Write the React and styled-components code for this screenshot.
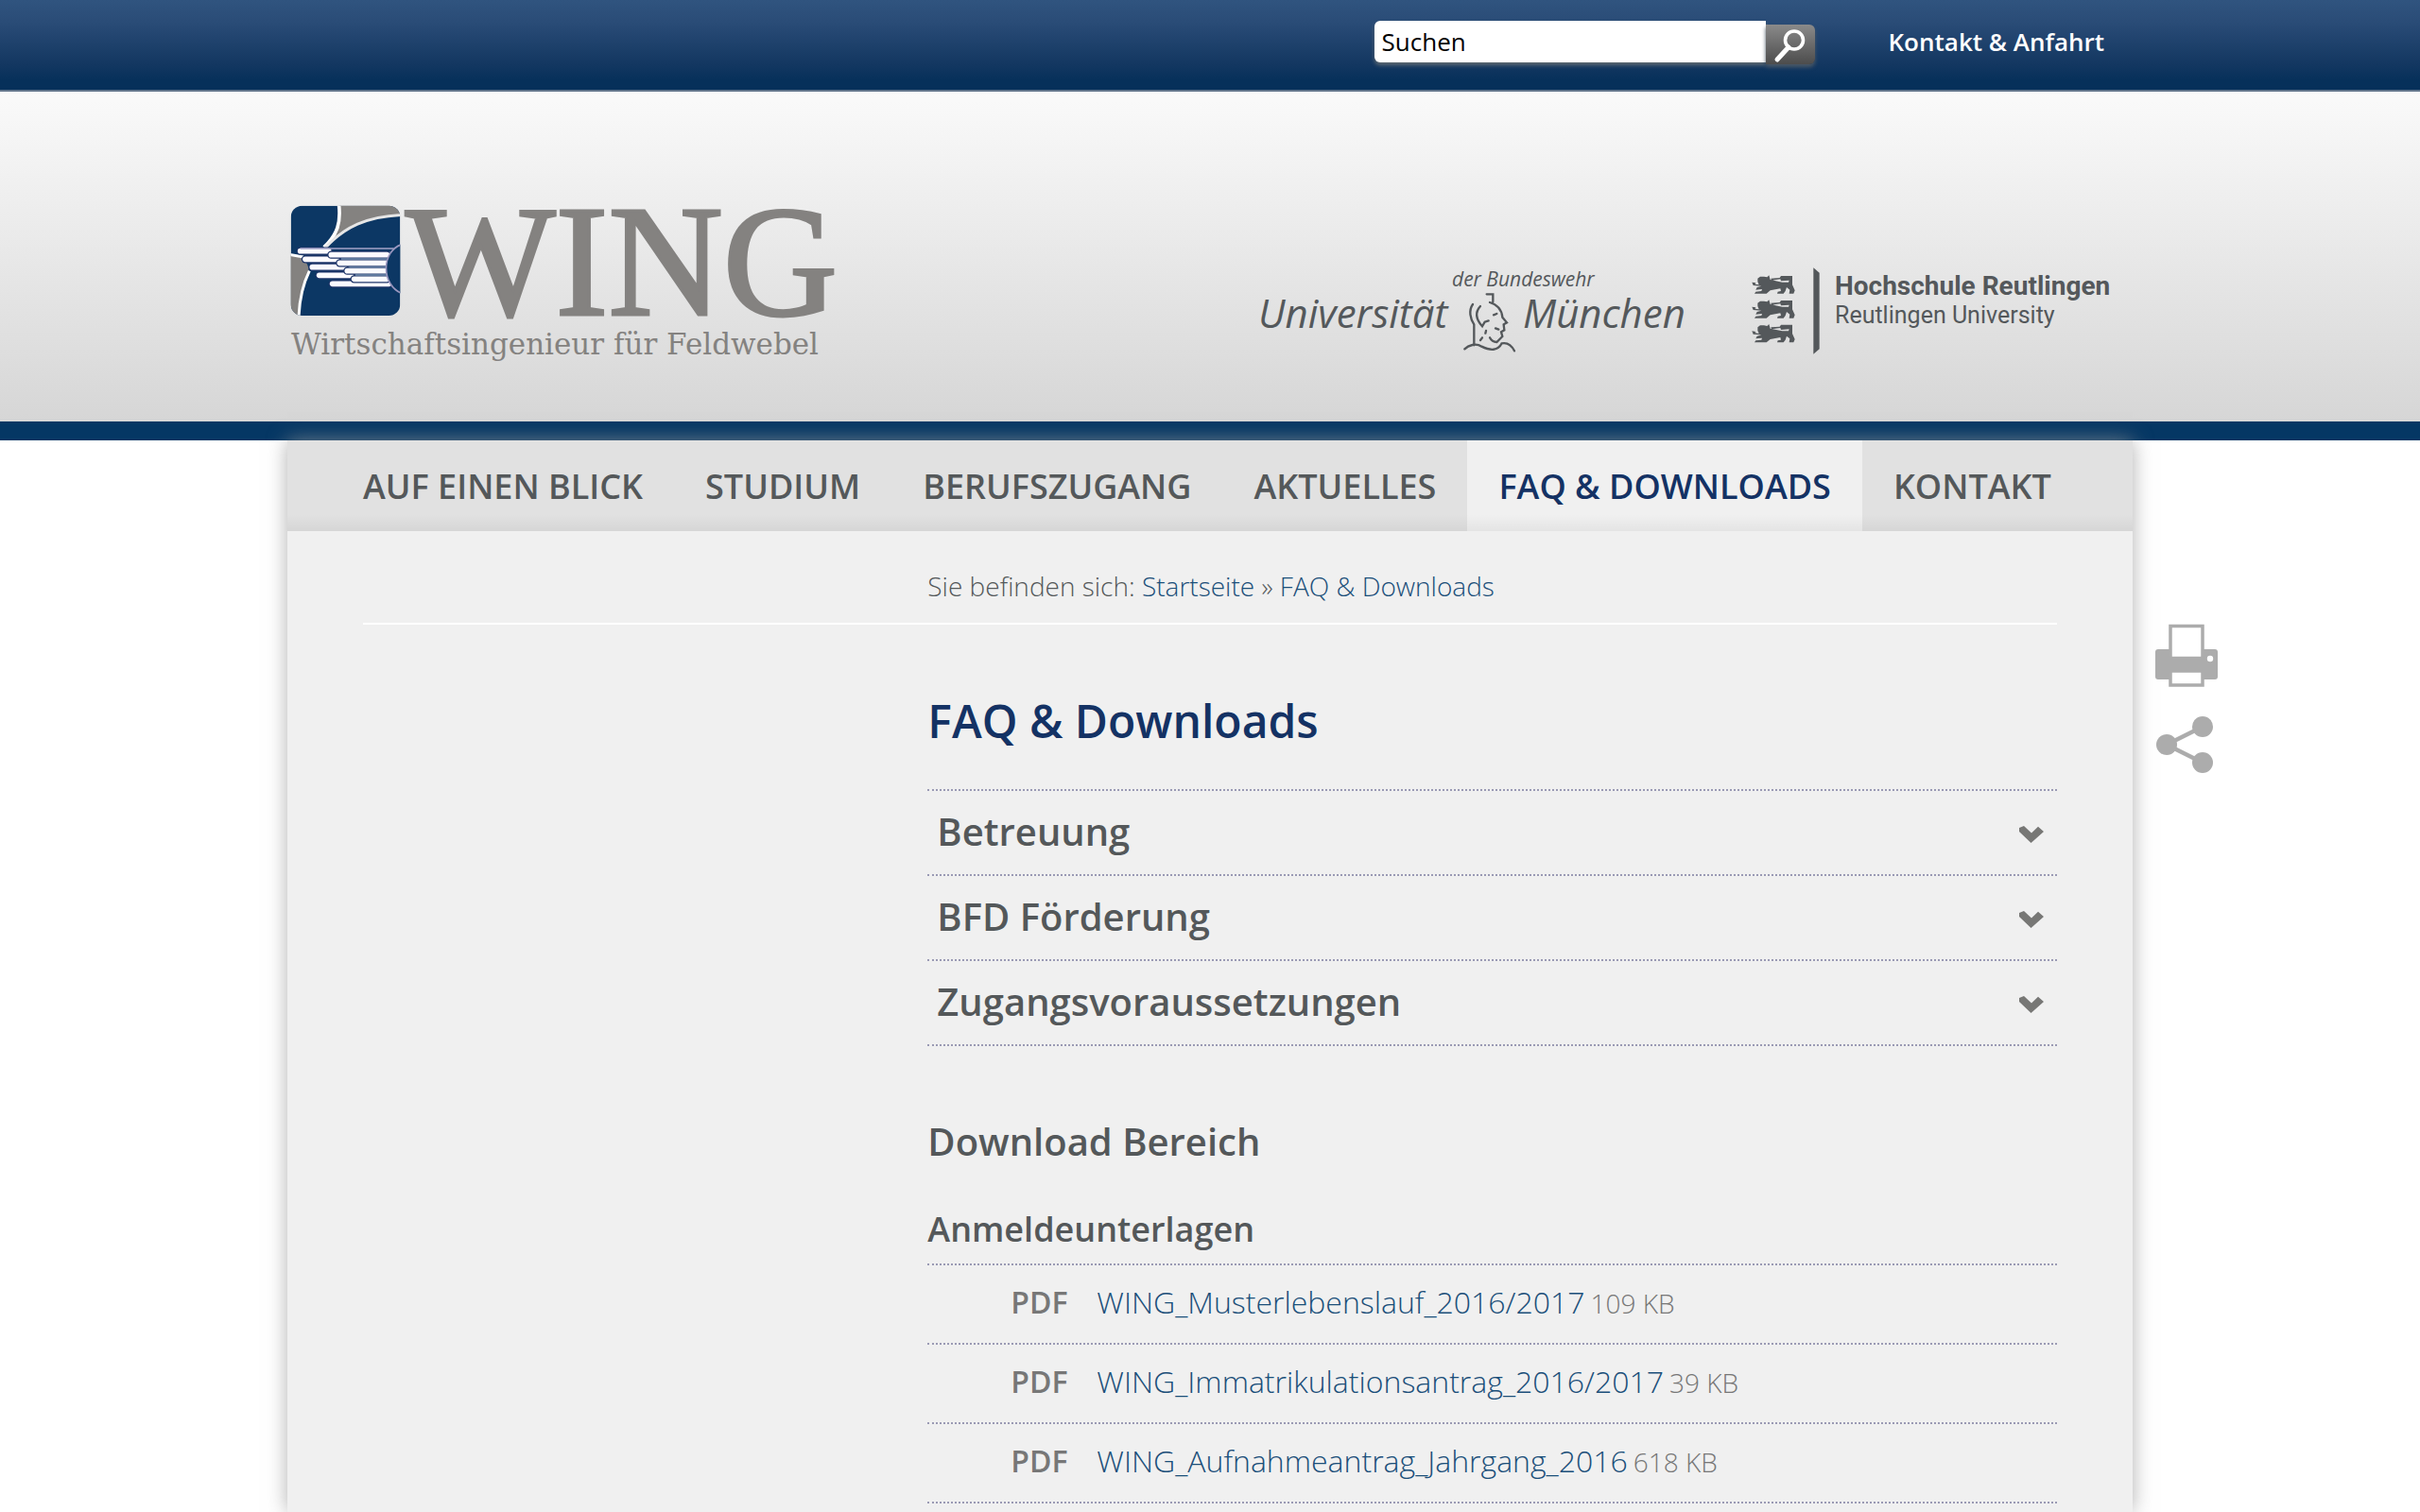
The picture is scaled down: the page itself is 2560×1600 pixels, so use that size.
import React, { useState } from "react";
import styled, { createGlobalStyle } from "styled-components";

const color = {
  navy: "#143264",
  bar: "#053764",
  text: "#54585a",
  muted: "#777777",
  link: "#1b4f7a",
  dots: "#9a9ab4",
  panel: "#f0f0f0",
  nav: "#e1e1e1",
  icon: "#acacac",
  logoGrey: "#848280",
  logoBlue: "#0c3764",
  partner: "#54585b",
};

const GlobalStyle = createGlobalStyle`
  *, *::before, *::after { box-sizing: border-box; }
  body {
    margin: 0;
    background: #fff;
    color: ${color.text};
    font-family: "Open Sans", "Noto Sans", sans-serif;
  }
  h1, h2, h3, p, ul { margin: 0; padding: 0; }
  ul { list-style: none; }
  a { text-decoration: none; }
`;

const Page = styled.div`
  display: flex;
  flex-direction: column;
  min-height: 100vh;
`;

const Container = styled.div`
  width: 100%;
  max-width: 1952px;
  margin: 0 auto;
  display: flex;
`;

const TopBar = styled.div`
  height: 97px;
  background: linear-gradient(#30547f, #2a4c77 24%, #133761 72%, #06305a 90%);
  border-bottom: 2px solid #62758b;
`;

const TopBarInner = styled(Container)`
  justify-content: flex-end;
  align-items: flex-start;
  gap: 78px;
  padding: 22px 30px 0 0;
`;

const SearchForm = styled.form`
  display: flex;
  align-items: flex-start;
`;

const SearchInput = styled.input`
  width: 414px;
  height: 44px;
  padding: 0 8px;
  border: 0;
  border-radius: 6px 0 0 6px;
  background: #fff;
  box-shadow: 0 3px 4px #5f6a72;
  color: #000;
  font: 400 26px "Open Sans", sans-serif;
  outline: none;
`;

const SearchButton = styled.button`
  width: 52px;
  height: 42px;
  margin-top: 4px;
  padding: 0;
  border: 0;
  border-radius: 0 6px 6px 0;
  background: linear-gradient(#8a8a8a, #4c4c4c);
  box-shadow: 0 3px 4px #4d5a66;
  cursor: pointer;
  svg { display: block; }
`;

const TopLink = styled.a`
  color: #fff;
  font-size: 26px;
  font-weight: 600;
  line-height: 44px;
`;

const Header = styled.header`
  background: linear-gradient(#fafafa, #d6d6d6);
  border-bottom: 20px solid ${color.bar};
`;

const HeaderInner = styled(Container)`
  justify-content: space-between;
  align-items: flex-end;
  height: 349px;
  padding: 0 4px 56px 0;
`;

const Partners = styled.div`
  display: flex;
  align-items: flex-end;
  gap: 40px;
`;

const LogoLink = styled.a`
  svg { display: block; }
`;

const Body = styled.div`
  flex: 1;
  display: grid;
  grid-template-columns: 1fr minmax(0, 1952px) 1fr;
`;

const Panel = styled.main`
  grid-column: 2;
  background: ${color.panel};
  box-shadow: 0 0 20px rgba(150, 150, 150, 0.75);
`;

const Nav = styled.nav`
  display: flex;
  padding: 0 47px;
  background: linear-gradient(rgba(0, 0, 0, 0) 82%, rgba(0, 0, 0, 0.05)) ${color.nav};
`;

const NavLink = styled.a`
  padding: 2px 33px 0;
  background: ${(p) =>
    p.$active ? `linear-gradient(rgba(0, 0, 0, 0) 82%, rgba(0, 0, 0, 0.05)) ${color.panel}` : "none"};
  color: ${(p) => (p.$active ? color.navy : color.text)};
  font-size: 36px;
  font-weight: 600;
  line-height: 94px;
  text-transform: uppercase;
  white-space: nowrap;
`;

const Content = styled.div`
  padding: 0 80px;
`;

const Columns = styled.div`
  display: grid;
  grid-template-columns: 1fr 2fr;
`;

const Main = styled.div`
  grid-column: 2;
`;

const BreadcrumbRow = styled(Columns)`
  padding: 39px 0 20px;
  border-bottom: 2px solid #fff;
`;

const Breadcrumb = styled(Main)`
  font-size: 28px;
  font-weight: 300;
  line-height: 38px;
`;

const CrumbLink = styled.a`
  color: ${color.link};
`;

const Title = styled.h1`
  margin: 70px 0 40px;
  color: ${color.navy};
  font-size: 48px;
  font-weight: 600;
  line-height: 64px;
`;

const Accordion = styled.div`
  border-top: 2px dotted ${color.dots};
`;

const AccordionButton = styled.button`
  display: flex;
  justify-content: space-between;
  align-items: center;
  width: 100%;
  height: 90px;
  padding: 0 14px 4px 10px;
  border: 0;
  border-bottom: 2px dotted ${color.dots};
  background: none;
  color: ${color.text};
  font: 600 40px "Open Sans", sans-serif;
  text-align: left;
  cursor: pointer;
  svg { margin-top: 8px; }
`;

const SectionTitle = styled.h2`
  margin: 72px 0 40px;
  font-size: 40px;
  font-weight: 600;
  line-height: 58px;
`;

const GroupTitle = styled.h3`
  margin-bottom: 12px;
  font-size: 36px;
  font-weight: 600;
  line-height: 48px;
`;

const DownloadList = styled.ul`
  border-top: 2px dotted ${color.dots};
`;

const DownloadItem = styled.li`
  display: flex;
  align-items: baseline;
  height: 84px;
  padding-left: 88px;
  border-bottom: 2px dotted ${color.dots};
  line-height: 78px;
`;

const FileType = styled.span`
  width: 91px;
  color: ${color.muted};
  font-size: 32px;
  font-weight: 600;
`;

const FileLink = styled.a`
  margin-right: 6px;
  color: ${color.link};
  font-size: 32px;
  font-weight: 300;
`;

const FileSize = styled.span`
  color: ${color.muted};
  font-size: 28px;
  font-weight: 300;
`;

const Tools = styled.aside`
  display: flex;
  flex-direction: column;
  align-items: flex-start;
  gap: 30px;
  padding: 194px 0 0 24px;
`;

const ToolButton = styled.button`
  padding: 0;
  border: 0;
  background: none;
  cursor: pointer;
  svg { display: block; }
`;

const SearchIcon = () => (
  <svg width="52" height="42" viewBox="0 0 52 42" fill="none" stroke="#fff" aria-hidden="true">
    <circle cx="30" cy="16.500" r="9.500" strokeWidth="3.600" />
    <path d="M24 24 12 37" strokeWidth="5" strokeLinecap="round" />
  </svg>
);

const Chevron = () => (
  <svg width="26" height="18" viewBox="0 0 26 18" aria-hidden="true">
    <path d="M0 2 5 0 13 7.500 20 .8 26 6 12.500 18 0 6Z" fill="#777775" />
  </svg>
);

const PrintIcon = () => (
  <svg width="68" height="68" viewBox="0 0 68 68" aria-hidden="true">
    <rect x="0" y="27" width="66" height="32" rx="3" fill={color.icon} />
    <rect x="16" y="2.500" width="34" height="34" fill="#fff" stroke={color.icon} strokeWidth="3.500" />
    <rect x="16" y="50" width="34" height="15" fill="#fff" stroke={color.icon} strokeWidth="3.500" />
    <rect x="14" y="35" width="38" height="16" fill={color.icon} />
    <circle cx="58" cy="37" r="3.200" fill="#fff" />
  </svg>
);

const ShareIcon = () => (
  <svg width="62" height="62" viewBox="0 0 62 62" aria-hidden="true">
    <path d="M50 11 12 30 50 49" fill="none" stroke={color.icon} strokeWidth="4.500" />
    <circle cx="50" cy="11" r="11" fill={color.icon} />
    <circle cx="12" cy="30" r="11" fill={color.icon} />
    <circle cx="50" cy="49" r="11" fill={color.icon} />
  </svg>
);

const SHORT_FEATHERS = [[65, 182, 155], [81, 208, 180], [103, 233, 204], [125, 259, 226], [167, 286, 346]];
const LONG_FEATHERS = [[163, 194], [190, 220], [214, 245], [236, 271]];

const WingLogo = () => (
  <svg width="588" height="210" viewBox="304 180 588 210" role="img" aria-label="WING – Wirtschaftsingenieur für Feldwebel">
    <defs>
      <clipPath id="emblem"><rect x="35" y="38" width="347" height="349" rx="36" /></clipPath>
    </defs>
    <g transform="translate(296 205) scale(.33333)">
      <g clipPath="url(#emblem)">
        <rect x="35" y="38" width="347" height="349" fill={color.logoBlue} />
        <path d="M188 30C194 90 185 130 150 168 210 105 280 72 390 66V30Z" fill={color.logoGrey} />
        <path d="M30 195Q90 200 92 245C72 285 62 330 58 395H30Z" fill={color.logoGrey} />
        <path d="M187 30C195 92 183 130 140 170" fill="none" stroke="#fff" strokeWidth="11" />
        <path d="M144 172C205 105 275 72 390 67" fill="none" stroke="#e6e6e6" strokeWidth="9" />
        <path d="M30 193 75 201M94 245C73 288 62 330 60 395" fill="none" stroke="#fff" strokeWidth="9" />
        <path d="M155 184H350V290H240Z" fill="#6d88ab" />
        <g strokeLinecap="round">
          {SHORT_FEATHERS.map(([x, y, end]) => (
            <g key={y}>
              <path d={`M${x} ${y}H${end}`} stroke="#1f3568" strokeWidth="25" />
              <path d={`M${x} ${y}H${end}`} stroke="#fbfaff" strokeWidth="17" />
            </g>
          ))}
          {LONG_FEATHERS.map(([x, y]) => (
            <g key={y}>
              <path d={`M${x} ${y}H340`} stroke="#1f3568" strokeWidth="25" />
              <path d={`M${x} ${y}H340`} stroke="#fbfaff" strokeWidth="17" />
            </g>
          ))}
        </g>
        <path d="M195 207H340M220 233H340M240 258H340" stroke="#6d88ab" strokeWidth="4" />
        <path d="M65 174H362" stroke="#a5a5c8" strokeWidth="4" />
        <path d="M390 160C320 180 320 292 390 318Z" fill={color.logoBlue} stroke="#9a97bf" strokeWidth="5" />
      </g>
    </g>
    <text x="429" y="333" fontFamily='"Liberation Serif", serif' fontSize="168" fill={color.logoGrey} stroke={color.logoGrey} strokeWidth="3">WING</text>
    <text x="308" y="375" fontFamily='"DejaVu Serif", serif' fontSize="31" fill={color.logoGrey}>
      Wirtschaftsingenieur für Feldwebel
    </text>
  </svg>
);

const UniLogo = () => (
  <svg width="480" height="120" viewBox="1330 270 480 120" fill={color.partner} role="img" aria-label="Universität der Bundeswehr München">
    <g fontFamily='"Open Sans", sans-serif' fontStyle="italic" fontWeight="500">
      <text x="1536" y="303" fontSize="21">der Bundeswehr</text>
      <text x="1331" y="347" fontSize="42">Universität</text>
      <text x="1611" y="347" fontSize="42">München</text>
    </g>
    <g transform="translate(1320 270) scale(.33333)" fill="none" stroke={color.partner} strokeWidth="7" strokeLinecap="round">
      <path d="M758 124H778V148M768 150C795 158 806 176 808 197L822 214 812 220 814 238 804 244 808 258 790 276C778 276 772 270 768 262" />
      <path d="M714 156C700 176 706 202 718 220V286M738 162C718 184 728 208 744 226L752 212 764 208" />
      <path d="M780 190 790 186M786 232 796 236M756 240 754 248M744 262 738 270" />
      <path d="M688 298C700 286 724 278 742 290 770 304 794 304 806 280 826 276 838 288 846 304" />
    </g>
  </svg>
);

const LION =
  "M100 86 112 88 110 92 122 94 118 84 118 74 126 68 138 68 148 70 154 64 158 78 196 86 216 86 218 80 192 82 190 76 162 80 160 74 188 72 192 66 228 66 228 94 236 112 232 122H218L220 110 210 102 206 114 200 122H180L182 116 192 114 190 106 158 112 146 122H108L112 116 130 114 132 108 112 110 116 102 130 98 104 96Z";

const HochschuleLogo = () => (
  <svg width="402" height="120" viewBox="1850 270 402 120" fill={color.partner} role="img" aria-label="Hochschule Reutlingen – Reutlingen University">
    <g transform="translate(1820 270) scale(.33333)">
      {[0, 78, 155].map((y) => (
        <path key={y} d={LION} transform={`translate(0 ${y})`} />
      ))}
      <path d="M295 40 314 56V298L295 314Z" />
    </g>
    <g fontFamily="Roboto, sans-serif">
      <text x="1941" y="312" fontSize="28" fontWeight="700">Hochschule Reutlingen</text>
      <text x="1941" y="342" fontSize="25">Reutlingen University</text>
    </g>
  </svg>
);

const NAV = ["Auf einen Blick", "Studium", "Berufszugang", "Aktuelles", "FAQ & Downloads", "Kontakt"];
const TOPICS = ["Betreuung", "BFD Förderung", "Zugangsvoraussetzungen"];
const FILES = [
  ["WING_Musterlebenslauf_2016/2017", "109 KB"],
  ["WING_Immatrikulationsantrag_2016/2017", "39 KB"],
  ["WING_Aufnahmeantrag_Jahrgang_2016", "618 KB"],
];

export default function App() {
  const [query, setQuery] = useState("Suchen");

  return (
    <Page>
      <GlobalStyle />
      <TopBar>
        <TopBarInner>
          <SearchForm role="search" onSubmit={(e) => e.preventDefault()}>
            <SearchInput aria-label="Suchen" value={query} onChange={(e) => setQuery(e.target.value)} />
            <SearchButton type="submit" aria-label="Suche starten"><SearchIcon /></SearchButton>
          </SearchForm>
          <TopLink href="#kontakt">Kontakt &amp; Anfahrt</TopLink>
        </TopBarInner>
      </TopBar>

      <Header>
        <HeaderInner>
          <LogoLink href="#start"><WingLogo /></LogoLink>
          <Partners>
            <LogoLink href="#unibw"><UniLogo /></LogoLink>
            <LogoLink href="#reutlingen"><HochschuleLogo /></LogoLink>
          </Partners>
        </HeaderInner>
      </Header>

      <Body>
        <Panel>
          <Nav aria-label="Hauptnavigation">
            {NAV.map((label) => (
              <NavLink key={label} href="#nav" $active={label === "FAQ & Downloads"}>{label}</NavLink>
            ))}
          </Nav>
          <Content>
            <BreadcrumbRow>
              <Breadcrumb>
                Sie befinden sich: <CrumbLink href="#start">Startseite</CrumbLink> »{" "}
                <CrumbLink href="#faq">FAQ &amp; Downloads</CrumbLink>
              </Breadcrumb>
            </BreadcrumbRow>
            <Columns>
              <Main>
                <Title>FAQ &amp; Downloads</Title>
                <Accordion>
                  {TOPICS.map((topic) => (
                    <AccordionButton key={topic} type="button" aria-expanded="false">
                      {topic}
                      <Chevron />
                    </AccordionButton>
                  ))}
                </Accordion>
                <SectionTitle>Download Bereich</SectionTitle>
                <GroupTitle>Anmeldeunterlagen</GroupTitle>
                <DownloadList>
                  {FILES.map(([name, size]) => (
                    <DownloadItem key={name}>
                      <FileType>PDF</FileType>
                      <FileLink href="#download">{name}</FileLink>
                      <FileSize>{size}</FileSize>
                    </DownloadItem>
                  ))}
                </DownloadList>
              </Main>
            </Columns>
          </Content>
        </Panel>
        <Tools aria-label="Seitenwerkzeuge">
          <ToolButton type="button" aria-label="Drucken"><PrintIcon /></ToolButton>
          <ToolButton type="button" aria-label="Teilen"><ShareIcon /></ToolButton>
        </Tools>
      </Body>
    </Page>
  );
}
